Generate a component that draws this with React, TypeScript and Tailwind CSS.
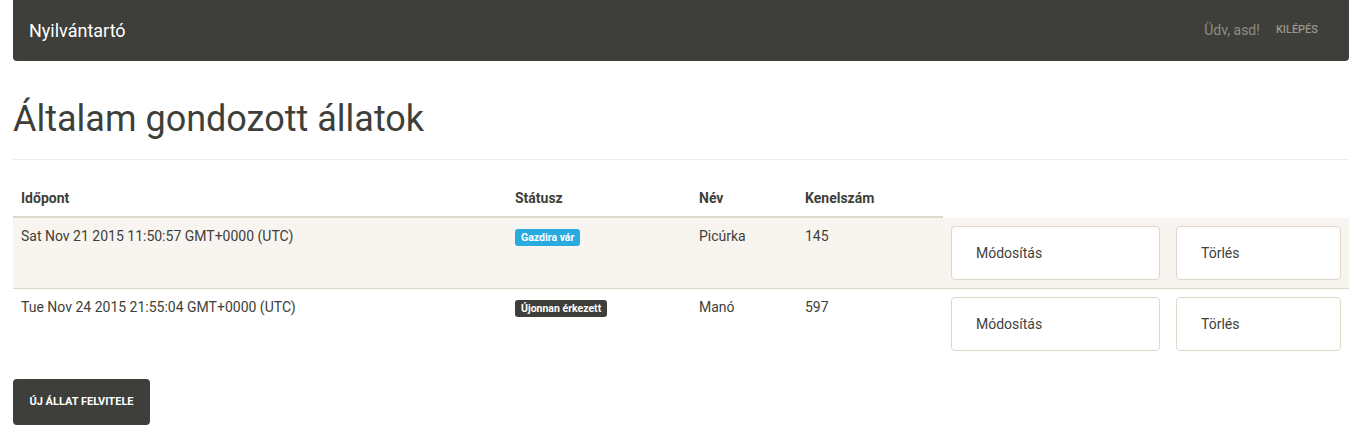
import React from "react";

// table column widths, measured from the reference
const COLS = "grid-cols-[494px_184px_106px_146px_225px_181px]";

interface Animal {
  date: string;
  status: string;
  statusClass: string;
  name: string;
  kennel: number;
}

const animals: Animal[] = [
  {
    date: "Sat Nov 21 2015 11:50:57 GMT+0000 (UTC)",
    status: "Gazdira vár",
    statusClass: "bg-[#29abe0]",
    name: "Picúrka",
    kennel: 145,
  },
  {
    date: "Tue Nov 24 2015 21:55:04 GMT+0000 (UTC)",
    status: "Újonnan érkezett",
    statusClass: "bg-[#3e3f3a]",
    name: "Manó",
    kennel: 597,
  },
];

const RowButton = ({ label }: { label: string }) => (
  <button className="h-[54px] w-full rounded-[4px] border border-[#dfd7ca] bg-white pl-[24px] text-left text-[14px] text-[#3e3f3a]">
    {label}
  </button>
);

export default function App() {
  return (
    <div className="min-h-screen bg-white font-['Roboto',sans-serif] text-[#3e3f3a]">
      <nav className="mx-[13px] flex h-[61px] w-[1336px] items-center justify-between rounded-b-[4px] bg-[#3e3f3a] pl-[16px] pr-[31px]">
        <span className="text-[18px] text-white">Nyilvántartó</span>
        <div className="flex items-center gap-[16px]">
          <span className="text-[14px] text-[#8e8c84]">Üdv, asd!</span>
          <a className="text-[11px] font-medium uppercase text-[#98978b]">Kilépés</a>
        </div>
      </nav>

      <main className="mx-[13px] w-[1336px]">
        <h1 className="mt-[36px] pb-[18px] text-[36px] leading-[44px] text-[#3e3f3a]">Általam gondozott állatok</h1>
        <div className="border-b border-[#f0ede8]" />

        <div className="mt-[20px] text-[14px]">
          <div className={`grid ${COLS}`}>
            <div className="col-span-4 grid grid-cols-[494px_184px_106px_146px] border-b-2 border-[#dfd7ca] font-bold">
              <div className="px-[8px] py-[8px] leading-[20px]">Időpont</div>
              <div className="px-[8px] py-[8px] leading-[20px]">Státusz</div>
              <div className="px-[8px] py-[8px] leading-[20px]">Név</div>
              <div className="px-[8px] py-[8px] leading-[20px]">Kenelszám</div>
            </div>
          </div>
          {animals.map((a, i) => (
            <div
              key={a.kennel}
              className={`grid ${COLS} border-[#dfd7ca] ${i === 0 ? "bg-[#f8f5f0] border-b" : ""}`}
            >
              <div className="p-[8px] leading-[20px]">{a.date}</div>
              <div className="p-[8px] leading-[20px]">
                <span className={`inline-block rounded-[3px] px-[6px] py-[2px] text-[10.5px] font-bold leading-[13px] text-white ${a.statusClass}`}>
                  {a.status}
                </span>
              </div>
              <div className="p-[8px] leading-[20px]">{a.name}</div>
              <div className="p-[8px] leading-[20px]">{a.kennel}</div>
              <div className="p-[8px]">
                <RowButton label="Módosítás" />
              </div>
              <div className="p-[8px]">
                <RowButton label="Törlés" />
              </div>
            </div>
          ))}
        </div>

        <button className="mt-[20px] h-[46px] w-[137px] rounded-[4px] bg-[#3e3f3a] text-[11px] font-bold uppercase text-white">
          Új állat felvitele
        </button>
      </main>
    </div>
  );
}
